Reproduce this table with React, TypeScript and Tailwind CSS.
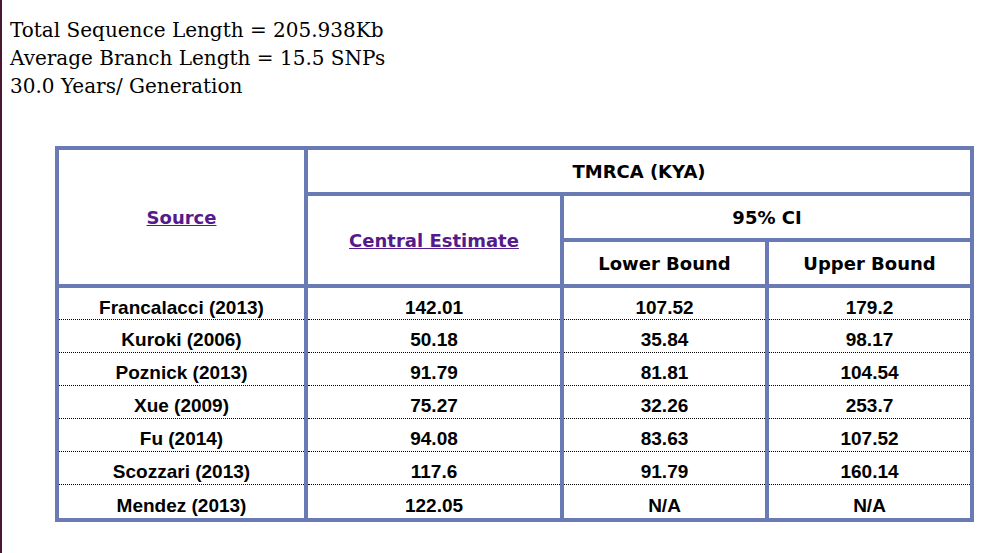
const rows: Array<[string, string, string, string]> = [
  ["Francalacci (2013)", "142.01", "107.52", "179.2"],
  ["Kuroki (2006)", "50.18", "35.84", "98.17"],
  ["Poznick (2013)", "91.79", "81.81", "104.54"],
  ["Xue (2009)", "75.27", "32.26", "253.7"],
  ["Fu (2014)", "94.08", "83.63", "107.52"],
  ["Scozzari (2013)", "117.6", "91.79", "160.14"],
  ["Mendez (2013)", "122.05", "N/A", "N/A"],
];

const head = "border-4 border-[#6a7ab4] text-center font-bold text-[18px] text-black font-['DejaVu_Sans',sans-serif]";
const link = "text-[#551a8b] underline";

export default function App() {
  return (
    <div className="min-h-[553px] w-[1000px] border-l-2 border-[#4a1830] bg-white pl-2 pt-4">
      <div className="font-['DejaVu_Serif',serif] text-[20px] leading-[28px] text-black">
        <div>Total Sequence Length = 205.938Kb</div>
        <div>Average Branch Length = 15.5 SNPs</div>
        <div>30.0 Years/ Generation</div>
      </div>
      <table className="ml-[45px] mt-[46px] w-[919px] table-fixed border-collapse">
        <colgroup>
          <col className="w-[249px]" />
          <col className="w-[256px]" />
          <col className="w-[205px]" />
          <col className="w-[205px]" />
        </colgroup>
        <thead>
          <tr className="h-[46px]">
            <th rowSpan={3} className={head}>
              <a href="#" className={link}>Source</a>
            </th>
            <th colSpan={3} className={head}>TMRCA (KYA)</th>
          </tr>
          <tr className="h-[46px]">
            <th rowSpan={2} className={head}>
              <a href="#" className={link}>Central Estimate</a>
            </th>
            <th colSpan={2} className={head}>95% CI</th>
          </tr>
          <tr className="h-[46px]">
            <th className={head}>Lower Bound</th>
            <th className={head}>Upper Bound</th>
          </tr>
        </thead>
        <tbody className="font-['Liberation_Sans',Arial,sans-serif] text-[19px] font-bold text-black">
          {rows.map((r, i) => (
            <tr key={r[0]} className={i < rows.length - 1 ? "h-[33px] border-b border-dotted border-black" : "h-[36px]"}>
              {r.map((c, j) => (
                <td key={j} className="border-x-4 border-x-[#6a7ab4] pt-[9px] pb-0 text-center align-middle leading-[20px]">
                  {c}
                </td>
              ))}
            </tr>
          ))}
        </tbody>
        <tfoot>
          <tr>
            <td colSpan={4} className="h-0 border-t-4 border-[#6a7ab4] p-0" />
          </tr>
        </tfoot>
      </table>
    </div>
  );
}
